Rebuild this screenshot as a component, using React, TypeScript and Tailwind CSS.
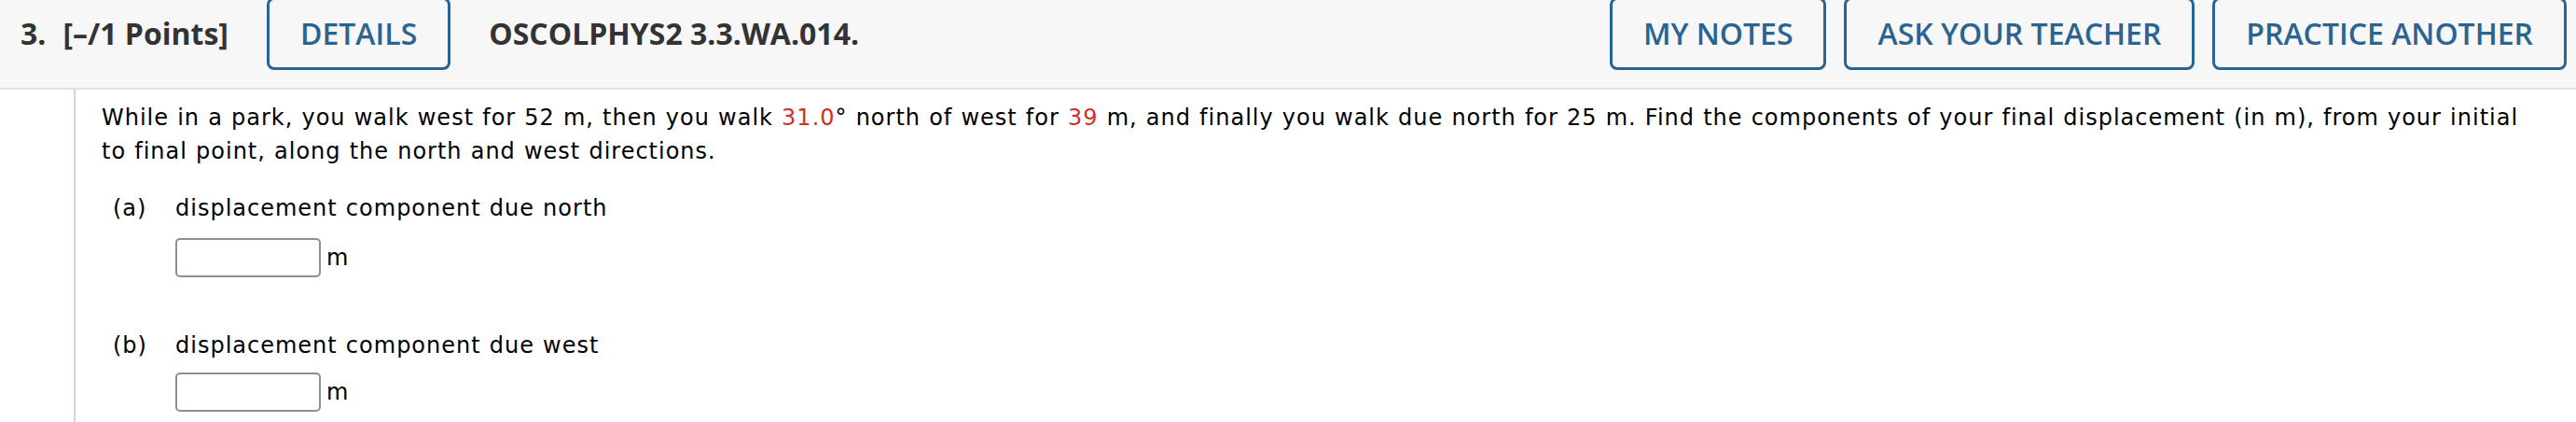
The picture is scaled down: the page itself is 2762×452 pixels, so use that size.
import React from "react";

function HeaderButton({ label }: { label: string }) {
  return (
    <button
      type="button"
      className="-mt-[3px] h-[78px] px-[33px] border-[3px] border-[#2b6391] rounded-[8px] text-[#2b6391] font-semibold text-[32px] leading-none bg-transparent whitespace-nowrap"
    >
      {label}
    </button>
  );
}

function AnswerRow({ gap }: { gap: string }) {
  return (
    <div className={`${gap} flex items-center`}>
      <input
        type="text"
        className="w-[156px] h-[42px] border-2 border-[#8f8f8f] rounded-[5px] bg-white"
      />
      <span className="ml-[6px] leading-[36px]">m</span>
    </div>
  );
}

export default function App() {
  return (
    <div className="w-[2762px] h-[452px] bg-white overflow-hidden">
      <div
        className="h-[96px] bg-[#f7f7f7] border-b-2 border-[#e0e0e0] flex items-start pl-[22px] pr-[10px]"
        style={{ fontFamily: '"Open Sans", "Liberation Sans", sans-serif' }}
      >
        <div className="h-[72px] flex items-center text-[32px] font-bold text-[#333333] whitespace-nowrap">
          <span>3.</span>
          <span className="ml-[18px]">[–/1 Points]</span>
        </div>
        <div className="ml-[41px]">
          <HeaderButton label="DETAILS" />
        </div>
        <div className="ml-[41px] h-[72px] flex items-center text-[32px] font-bold text-[#333333] whitespace-nowrap">
          OSCOLPHYS2 3.3.WA.014.
        </div>
        <div className="ml-auto flex gap-[19px]">
          <HeaderButton label="MY NOTES" />
          <HeaderButton label="ASK YOUR TEACHER" />
          <HeaderButton label="PRACTICE ANOTHER" />
        </div>
      </div>

      <div className="flex h-[356px]">
        <div className="w-[79px] shrink-0" />
        <div
          className="flex-1 border-l-2 border-[#d4d4d4] pl-[28px] pt-[12px] pr-[40px] text-[24px] leading-[36px] tracking-[1px] [word-spacing:0.5px] text-black"
          style={{ fontFamily: '"DejaVu Sans", Verdana, sans-serif' }}
        >
          <p>
            <span>While in a park, you walk west for 52 m, then you walk </span>
            <span className="text-[#d0302b]">31.0</span>
            <span>° north of west for </span>
            <span className="text-[#d0302b]">39</span>
            <span>
              {" "}
              m, and finally you walk due north for 25 m. Find the components of your final displacement (in m),
              from your initial
            </span>
            <br />
            <span>to final point, along the north and west directions.</span>
          </p>

          <div className="mt-[25px] pl-[12px] flex">
            <span className="w-[67px] shrink-0">(a)</span>
            <div>
              <div>displacement component due north</div>
              <AnswerRow gap="mt-[14px]" />
            </div>
          </div>

          <div className="mt-[55px] pl-[12px] flex">
            <span className="w-[67px] shrink-0">(b)</span>
            <div>
              <div>displacement component due west</div>
              <AnswerRow gap="mt-[11px]" />
            </div>
          </div>
        </div>
      </div>
    </div>
  );
}
